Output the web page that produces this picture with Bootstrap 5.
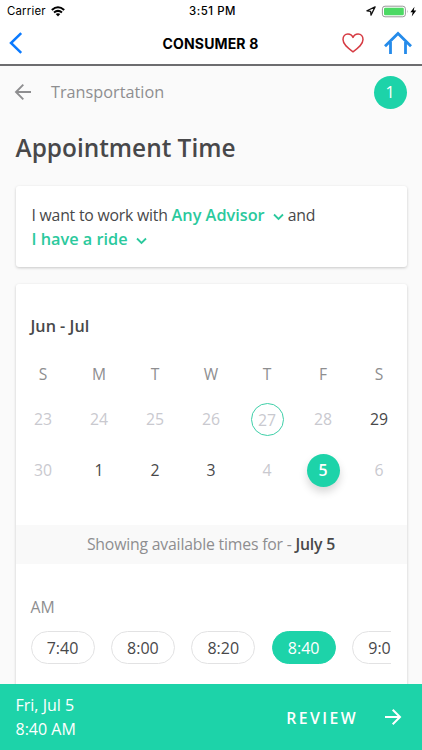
<!DOCTYPE html>
<html lang="en">
<head>
<meta charset="utf-8">
<meta name="viewport" content="width=device-width, initial-scale=1">
<title>Appointment Time</title>
<link href="https://cdn.jsdelivr.net/npm/bootstrap@5.3.0/dist/css/bootstrap.min.css" rel="stylesheet">
<style>
:root{--mint:#1dd3a9;--mint-text:#2bc99d;--ink:#48484a;--muted:#8e8e90}
body{font-family:"Open Sans","Noto Sans",sans-serif;font-size:16px;line-height:24px;color:var(--ink);background:#fafafa;height:750px;overflow:hidden}
svg{display:block;flex:none;fill:none}
.ios{font-family:Inter,"Liberation Sans",sans-serif;color:#000}
.status{height:22px;font-size:11.4px;line-height:22px;padding:0 4px 0 7px}
.status .carrier{letter-spacing:.2px}
.status .clock{font-weight:500;font-size:11.4px;letter-spacing:.55px}
.titlebar{height:44px;border-bottom:2px solid #6d6d6f;padding:0 10px 0 9px}
.titlebar h1{font-size:14px;line-height:42px;font-weight:700;letter-spacing:.15px;padding-top:1px}
.side{flex:1 1 0}
.home{margin-left:20px}
.crumb{height:52px;padding:0 15.5px 0 14px;color:var(--muted)}
.crumb-label{margin-left:19px;font-size:16.25px}
.count{width:33px;height:33px;background:var(--mint)}
.heading{font-size:24.4px;line-height:32px;font-weight:600;margin:14px 15.5px 22px}
.panel{margin:0 15.5px;border:0;border-radius:3px;color:inherit;box-shadow:0 1px 3px rgba(0,0,0,.2)}
.prefs{height:81px;padding:17px 16px;font-size:15.8px;letter-spacing:-.22px}
.pick{color:var(--mint-text);font-weight:600;font-size:16.3px;letter-spacing:0}
.pick svg{display:inline-block}
.schedule{margin-top:17px;height:466px}
.month{font-weight:600;font-size:16.2px;line-height:24px;margin:30px 15px 0}
.week{display:grid;grid-template-columns:repeat(7,1fr);justify-items:center;align-items:center;margin:0 -.5px;font-size:15.8px}
.weekdays{margin-top:24px;color:var(--muted);font-size:15.6px}
.first{margin-top:17px}
.second{margin-top:18px}
.day{width:33px;height:33px;line-height:33px;text-align:center}
.off{color:#c9c9cf}
.today{border:1.4px solid #3ecfa8;line-height:33px}
.chosen{background:var(--mint);color:#fff;font-weight:600;box-shadow:0 5px 9px rgba(0,0,0,.16)}
.notice{height:39px;line-height:39px;background:#f9f9f9;color:var(--muted);font-size:15.8px;letter-spacing:-.2px;text-align:center;margin-top:38px}
.notice b{color:var(--ink);font-weight:600}
.period{margin:31px 15px 0;color:var(--muted);font-size:15.8px}
.slots{gap:16.4px;margin:12px 15.8px 0 15px}
.slot{flex:none;width:64px;height:33px;line-height:33px;border:1px solid #e2e2e3;text-align:center;font-size:16px}
.slot.active{background:var(--mint);border-color:var(--mint);color:#fff}
.actionbar{height:66px;background:var(--mint);color:#fff;padding:0 20px 0 15.5px}
.when{font-size:16px}
.review{font-weight:600;letter-spacing:2.4px;font-size:15.8px;padding-top:1px}
.go{margin-left:26px;margin-top:-1px}
</style>
</head>
<body class="d-flex flex-column">
<header class="ios bg-white flex-shrink-0">
  <div class="status d-flex align-items-center">
    <div class="side d-flex align-items-center"><span class="carrier">Carrier</span>
      <svg class="ms-1" width="15" height="11" viewBox="-1 0 15 11"><g stroke="#000" stroke-width="2"><path d="M.8 4.1Q7-1.5 13.2 4.1"/><path d="M3 6.6Q7 3.2 11 6.6"/></g><path fill="#000" d="M4.7 8.1Q7 6.3 9.3 8.1L7 10.6z"/></svg>
    </div>
    <span class="clock">3:51 PM</span>
    <div class="side d-flex align-items-center justify-content-end">
      <svg width="10" height="10" viewBox="0 0 10 10"><path d="M9.100.900.900 4.800l3.700.500.400 3.800z" stroke="#111" stroke-width="1.250" stroke-linejoin="round"/></svg>
      <svg class="ms-1" width="38" height="13" viewBox="0 0 38 13"><rect x="2.400" y="1.200" width="23" height="10.600" rx="2.600" stroke="#999"/><rect x="4" y="2.800" width="19.800" height="7.400" rx="1.300" fill="#4cd964"/><path d="M27 4.700q1.100 1.800 0 3.600" fill="#999"/><path d="M34.500 1.700 30.400 7.300h2.300l-1 4.200 4.600-5.900h-2.600z" fill="#000"/></svg>
    </div>
  </div>
  <nav class="titlebar d-flex align-items-center">
    <div class="side"><svg width="14" height="22" viewBox="0 0 14 22"><path d="M12.2 1.2 2 11l10.2 9.8" stroke="#0a7aff" stroke-width="2.5"/></svg></div>
    <h1 class="m-0">CONSUMER 8</h1>
    <div class="side d-flex align-items-center justify-content-end">
      <svg width="22" height="20" viewBox="0 0 22 20"><path d="M11 18.800C5.700 15 1 11.400 1 6.500 1 3.300 3.100 1 5.900 1 8.200 1 10.100 2.200 11 4.400 11.900 2.200 13.800 1 16.100 1 18.900 1 21 3.300 21 6.500c0 4.900-4.700 8.500-10 12.300z" stroke="#d63b43" stroke-width="1.5" stroke-linejoin="round"/></svg>
      <svg class="home" width="28" height="24" viewBox="0 0 28 24"><path d="M1 15.200 14 2.400l13 12.800M6.500 11v12M21.500 11v12" stroke="#258bea" stroke-width="2.800"/></svg>
    </div>
  </nav>
</header>
<main class="flex-grow-1 overflow-hidden">
  <div class="crumb d-flex align-items-center">
    <svg width="18" height="18" viewBox="0 0 18 18"><path d="M17 9H2M9.300 1.700 2 9l7.300 7.300" stroke="#8e8e90" stroke-width="1.900"/></svg>
    <span class="crumb-label">Transportation</span>
    <span class="count rounded-circle text-white d-flex align-items-center justify-content-center ms-auto">1</span>
  </div>
  <h2 class="heading">Appointment Time</h2>
  <section class="panel prefs card d-block">
    I want to work with <span class="pick">Any Advisor <svg class="ms-1" width="11" height="8" viewBox="0 0 11 8"><path d="m1 1.500 4.500 4.500L10 1.500" stroke="#2bc99d" stroke-width="1.800"/></svg></span> and<br>
    <span class="pick">I have a ride <svg class="ms-1" width="11" height="8" viewBox="0 0 11 8"><path d="m1 1.500 4.500 4.500L10 1.500" stroke="#2bc99d" stroke-width="1.800"/></svg></span>
  </section>
  <section class="panel schedule card">
    <h3 class="month">Jun - Jul</h3>
    <div class="week weekdays"><span>S</span><span>M</span><span>T</span><span>W</span><span>T</span><span>F</span><span>S</span></div>
    <div class="week first"><span class="day off">23</span><span class="day off">24</span><span class="day off">25</span><span class="day off">26</span><span class="day off today rounded-circle">27</span><span class="day off">28</span><span class="day">29</span></div>
    <div class="week second"><span class="day off">30</span><span class="day">1</span><span class="day">2</span><span class="day">3</span><span class="day off">4</span><span class="day chosen rounded-circle">5</span><span class="day off">6</span></div>
    <div class="notice">Showing available times for - <b>July 5</b></div>
    <div class="period">AM</div>
    <div class="slots d-flex overflow-hidden"><span class="slot rounded-pill">7:40</span><span class="slot rounded-pill">8:00</span><span class="slot rounded-pill">8:20</span><span class="slot active rounded-pill">8:40</span><span class="slot rounded-pill">9:00</span></div>
  </section>
</main>
<footer class="actionbar d-flex align-items-center flex-shrink-0">
  <div class="when">Fri, Jul 5<br>8:40 AM</div>
  <span class="review ms-auto">REVIEW</span>
  <svg class="go" width="18" height="18" viewBox="0 0 18 18"><path d="M1 9h15M8.700 1.700 16 9l-7.300 7.300" stroke="#fff" stroke-width="2"/></svg>
</footer>
<script src="https://cdn.jsdelivr.net/npm/bootstrap@5.3.0/dist/js/bootstrap.bundle.min.js"></script>
</body>
</html>
